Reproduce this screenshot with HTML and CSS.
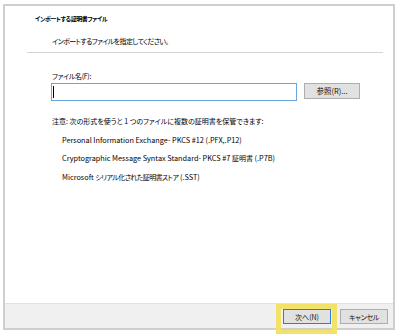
FILE: index.html
```html
<!DOCTYPE html>
<html lang="ja">
<head>
<meta charset="utf-8">
<title>証明書のインポート</title>
<link rel="stylesheet" href="styles.css">
</head>
<body>
<div class="dialog">
  <div class="header">
    <div class="title">インポートする証明書ファイル</div>
    <div class="subtitle">インポートするファイルを指定してください。</div>
  </div>
  <div class="content">
    <div class="label">ファイル名(F):</div>
    <div class="file-row">
      <div class="input"><span class="caret"></span></div>
      <div class="btn browse">参照(R)...</div>
    </div>
    <div class="note">注意: 次の形式を使うと 1 つのファイルに複数の証明書を保管できます:</div>
    <ul class="formats">
      <li>Personal Information Exchange- PKCS #12 (.PFX,.P12)</li>
      <li>Cryptographic Message Syntax Standard- PKCS #7 <span class="ja">証明書</span> (.P7B)</li>
      <li>Microsoft <span class="ja kana">シリアル化された証明書ストア</span> (.SST)</li>
    </ul>
  </div>
  <div class="footer">
    <div class="btn-wrap">
      <div class="btn primary">次へ(N)</div>
      <span class="highlight"></span>
    </div>
    <div class="btn cancel">キャンセル</div>
  </div>
</div>
</body>
</html>
```

FILE: styles.css
```css
html, body {
  margin: 0;
  padding: 0;
  width: 400px;
  height: 334px;
  overflow: hidden;
  background: #ffffff;
}

body {
  font-family: "Noto Sans CJK JP", "Noto Sans", sans-serif;
  font-feature-settings: "palt";
  font-size: 7px;
  color: #000000;
}

.dialog {
  box-sizing: border-box;
  margin: 4px 0 0 3px;
  width: 392px;
  height: 326px;
  border: 2px solid #cfcfcf;
  display: flex;
  flex-direction: column;
  background: #ffffff;
}

.header {
  margin: 0 10px 0 22px;
  padding: 8px 0 6px;
  border-bottom: 1px solid #d4d4d4;
}

.title {
  padding-left: 8px;
  font-weight: bold;
  font-size: 6px;
  letter-spacing: -0.4px;
  line-height: 10px;
}

.subtitle {
  margin-top: 12px;
  padding-left: 25px;
  letter-spacing: -0.6px;
  line-height: 10px;
}

.content {
  flex: 1;
  padding-left: 47px;
}

.label {
  margin-top: 18px;
  letter-spacing: -0.3px;
  line-height: 10px;
}

.file-row {
  display: flex;
  align-items: flex-start;
  margin-top: 2px;
}

.input {
  box-sizing: border-box;
  width: 246px;
  height: 18px;
  margin-left: -1px;
  border: 1px solid #6aa6de;
  padding: 2px 0 0 1px;
}

.caret {
  display: block;
  width: 1px;
  height: 12px;
  background: #000;
}

.btn {
  box-sizing: border-box;
  display: flex;
  align-items: center;
  justify-content: center;
  border: 1px solid #adadad;
  background: #e1e1e1;
  line-height: 10px;
  color: #111;
}

.browse {
  margin-left: 7px;
  width: 56px;
  height: 16px;
  font-size: 7.5px;
}

.note {
  margin-top: 11px;
  line-height: 18.6px;
}

.formats {
  list-style: none;
  margin: 0;
  padding: 0 0 0 10px;
  font-size: 7.3px;
  line-height: 18.6px;
}

.ja {
  font-size: 7px;
}

.kana {
  letter-spacing: -0.6px;
}

.footer {
  box-sizing: border-box;
  height: 25px;
  border-top: 1px solid #e2e2e2;
  background: #f0f0f0;
  display: flex;
  justify-content: flex-end;
  gap: 9px;
  padding: 5px 5px 0 0;
}

.footer .btn {
  width: 48px;
  height: 15px;
}

.footer .cancel {
  letter-spacing: -0.35px;
}

.btn-wrap {
  position: relative;
}

.primary {
  border-color: #2a7fd4;
}

.highlight {
  position: absolute;
  left: -7px;
  top: -5px;
  right: -6px;
  bottom: -10px;
  border: 5px solid #f3e26a;
  border-bottom-width: 8px;
}
```
